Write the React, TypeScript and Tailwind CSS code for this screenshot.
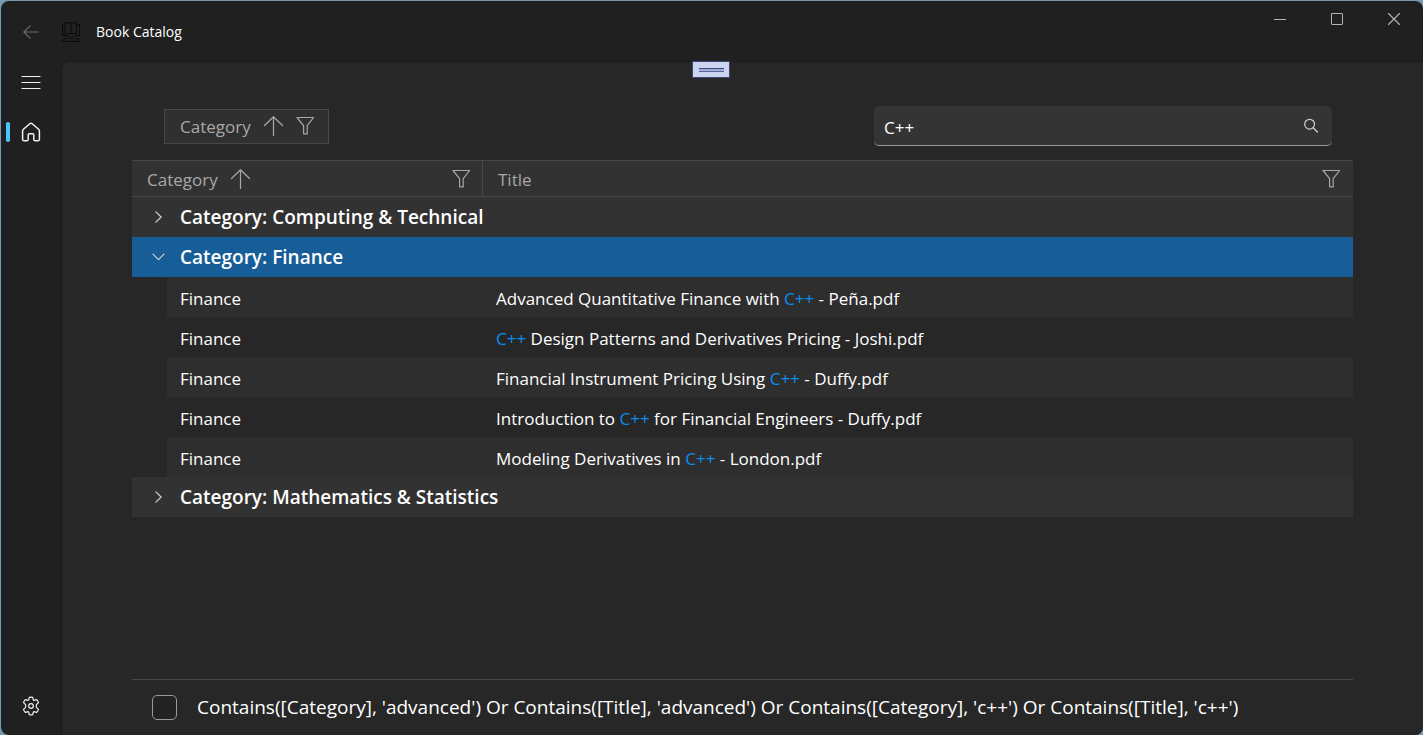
import { Fragment, useState } from "react";
import type { ReactNode } from "react";

type Book = { category: string; title: string };
type Group = { name: string; books: Book[] };

const groups: Group[] = [
  { name: "Computing & Technical", books: [] },
  {
    name: "Finance",
    books: [
      { category: "Finance", title: "Advanced Quantitative Finance with C++ - Peña.pdf" },
      { category: "Finance", title: "C++ Design Patterns and Derivatives Pricing - Joshi.pdf" },
      { category: "Finance", title: "Financial Instrument Pricing Using C++ - Duffy.pdf" },
      { category: "Finance", title: "Introduction to C++ for Financial Engineers - Duffy.pdf" },
      { category: "Finance", title: "Modeling Derivatives in C++ - London.pdf" },
    ],
  },
  { name: "Mathematics & Statistics", books: [] },
];

function Highlight({ text, term }: { text: string; term: string }) {
  const at = term ? text.toLowerCase().indexOf(term.toLowerCase()) : -1;
  if (at < 0) return <>{text}</>;
  return (
    <>
      {text.slice(0, at)}
      <mark className="bg-transparent text-[#0a8cf0]">{text.slice(at, at + term.length)}</mark>
      {text.slice(at + term.length)}
    </>
  );
}

function Icon({ size, className, children }: { size: number; className?: string; children: ReactNode }) {
  return (
    <svg
      width={size}
      height={size}
      viewBox={`0 0 ${size} ${size}`}
      fill="none"
      stroke="currentColor"
      strokeLinecap="round"
      strokeLinejoin="round"
      className={className}
      aria-hidden="true"
    >
      {children}
    </svg>
  );
}

function SortArrow() {
  return (
    <Icon size={20} className="shrink-0">
      <path d="M10.5 0.8V19.5M1.5 9.5L10.5 0.8L19.5 9.5" strokeWidth="1.2" />
    </Icon>
  );
}

function Funnel() {
  return (
    <Icon size={20} className="shrink-0">
      <path d="M2 1.5H18.6L12.2 9.6V17.8H8.6V9.6Z" strokeWidth="1.2" />
    </Icon>
  );
}

function Chevron({ open }: { open: boolean }) {
  return (
    <Icon size={14} className="shrink-0 text-[#d8d8d8]">
      <path d={open ? "M1 4.2L6.5 9.7L12 4.2" : "M3.9 1.8L9.1 7L3.9 12.2"} strokeWidth="1.1" />
    </Icon>
  );
}

function BookLogo() {
  return (
    <Icon size={20} className="text-[#0a0a0a]">
      <path
        d="M4.5 0.8H15.5V11.5H4.5ZM10 0.8V11.5M4.5 2.5H1.5V13.5H6M15.5 2.5H18.5V13.5H14M5.5 13L10 17L14.5 13M5.5 16.5H3L0.6 19.5H19.4L17 16.5H14.5"
        strokeWidth="1"
      />
    </Icon>
  );
}

function TitleBar() {
  return (
    <header className="flex h-[60px] shrink-0 justify-between">
      <div className="flex items-center pt-px">
        <button aria-label="Back" className="flex w-[60px] justify-center text-[#6b6b6b]">
          <Icon size={16}>
            <path d="M15.4 8H0.8M7.2 1.8L0.8 8L7.2 14.2" strokeWidth="1.1" />
          </Icon>
        </button>
        <BookLogo />
        <h1 className="ml-[15px] text-sm text-white">Book Catalog</h1>
      </div>
      <div className="flex h-9 pr-px text-[#b4b4b4]">
        <button aria-label="Minimize" className="flex w-[57px] items-center justify-center">
          <Icon size={12}>
            <path d="M0 6.5H12" strokeLinecap="butt" />
          </Icon>
        </button>
        <button aria-label="Maximize" className="flex w-[57px] items-center justify-center">
          <Icon size={12}>
            <rect x="0.5" y="0.5" width="11" height="11" rx="0.5" />
          </Icon>
        </button>
        <button aria-label="Close" className="flex w-[57px] items-center justify-center">
          <Icon size={12}>
            <path d="M0.5 0.5L11.5 11.5M11.5 0.5L0.5 11.5" strokeWidth="1.1" />
          </Icon>
        </button>
      </div>
    </header>
  );
}

function SideNav() {
  return (
    <nav className="flex w-[60px] shrink-0 flex-col items-center pt-px text-[#f0f0f0]">
      <button aria-label="Menu" className="flex h-10 w-full items-center justify-center">
        <Icon size={20}>
          <path d="M1 4.5H19M1 10.5H19M1 16.5H19" strokeWidth="1.2" />
        </Icon>
      </button>
      <a href="#home" aria-label="Home" className="mt-1.5 flex h-12 w-full items-center">
        <span className="ml-[5px] h-5 w-1 rounded-full bg-[#4cc2ff]" />
        <Icon size={20} className="ml-[11px]">
          <path
            d="M10 1.2Q10.6 1.2 11.2 1.7L17.6 7.3Q18.4 8 18.4 9V17.2Q18.4 18.8 16.8 18.8H14.2Q12.8 18.8 12.8 17.4V13Q12.8 11.8 11.6 11.8H8.4Q7.2 11.8 7.2 13V17.4Q7.2 18.8 5.8 18.8H3.2Q1.6 18.8 1.6 17.2V9Q1.6 8 2.4 7.3L8.8 1.7Q9.4 1.2 10 1.2Z"
            strokeWidth="1.5"
          />
        </Icon>
      </a>
      <button aria-label="Settings" className="mt-auto mb-[9px] flex h-10 w-full items-center justify-center">
        <Icon size={20}>
          <path
            d="M8.3 1.4Q10 1 11.7 1.4L12.2 3.5Q12.5 4.5 13.6 4.2L15.7 3.6Q17 4.9 17.5 6.6L15.9 8.2Q15.2 9 15.2 10Q15.2 11 15.9 11.8L17.5 13.4Q17 15.1 15.7 16.4L13.6 15.8Q12.5 15.5 12.2 16.5L11.7 18.6Q10 19 8.3 18.6L7.8 16.5Q7.5 15.5 6.4 15.8L4.3 16.4Q3 15.1 2.5 13.4L4.1 11.8Q4.8 11 4.8 10Q4.8 9 4.1 8.2L2.5 6.6Q3 4.9 4.3 3.6L6.4 4.2Q7.5 4.5 7.8 3.5Z"
            strokeWidth="1.2"
          />
          <circle cx="10" cy="10" r="2.3" strokeWidth="1.2" />
        </Icon>
      </button>
    </nav>
  );
}

export default function App() {
  const [query, setQuery] = useState("C++");
  const [openGroup, setOpenGroup] = useState("Finance");
  const [filterOn, setFilterOn] = useState(false);

  return (
    <div className="flex min-h-screen flex-col bg-[#7899b0] pt-px pl-px font-['Open_Sans','Noto_Sans',sans-serif]">
      <div className="flex flex-1 flex-col overflow-hidden rounded-lg bg-[#202020]">
        <TitleBar />
        <div className="flex flex-1">
          <SideNav />
          <main className="relative flex min-w-0 flex-1 flex-col rounded-tl-lg border-t border-l border-[#1c1c1c] bg-[#272727] px-[70px]">
            <button
              aria-label="Toolbar"
              className="absolute -top-px left-[630px] flex h-[17px] w-[38px] flex-col items-center justify-center border border-[#3d4878] bg-[#ccd5f0]"
            >
              <span className="h-px w-[25px] bg-[#3d4878]" />
              <span className="h-0.5 w-[25px] bg-[#a3aed4]" />
              <span className="h-px w-[25px] bg-[#5c689a]" />
            </button>

            <div className="flex items-center justify-between pt-11 pr-[21px] pb-3.5 pl-8">
              <div className="flex h-[35px] items-center border border-[#484848] bg-[#303030] px-[15px] text-[17px] text-[#a8a8a8]">
                <span className="mr-3 pt-0.5">Category</span>
                <button aria-label="Sort by category" className="mr-3">
                  <SortArrow />
                </button>
                <button aria-label="Filter category" className="-mr-0.5">
                  <Funnel />
                </button>
              </div>
              <div className="flex h-10 w-[458px] items-center rounded-[5px] border-b border-[#9a9a9a] bg-[#343434] px-2.5">
                <input
                  type="text"
                  aria-label="Search"
                  value={query}
                  onChange={(e) => setQuery(e.target.value)}
                  className="h-8 min-w-0 flex-1 bg-transparent pt-1 text-[17px] text-white outline-none"
                />
                <Icon size={16} className="mr-[3px] text-[#cfcfcf]">
                  <circle cx="6.6" cy="6.2" r="4.9" strokeWidth="1.2" />
                  <path d="M10.2 9.8L14.4 14" strokeWidth="1.3" />
                </Icon>
              </div>
            </div>

            <table className="w-full table-fixed border-separate border-spacing-0 text-left text-[17px] text-white">
              <colgroup>
                <col className="w-[35px]" />
                <col className="w-[316px]" />
                <col />
              </colgroup>
              <thead className="bg-[#323232] text-[#a8a8a8]">
                <tr className="h-[37px]">
                  <th colSpan={2} className="border-y border-r border-[#484848] p-0 font-normal">
                    <div className="flex items-center pr-[11px] pl-[15px]">
                      <span className="mr-3 pt-0.5">Category</span>
                      <SortArrow />
                      <button aria-label="Filter category column" className="ml-auto">
                        <Funnel />
                      </button>
                    </div>
                  </th>
                  <th className="border-y border-[#484848] p-0 font-normal">
                    <div className="flex items-center pr-3 pl-[15px]">
                      <span className="pt-0.5">Title</span>
                      <button aria-label="Filter title column" className="ml-auto">
                        <Funnel />
                      </button>
                    </div>
                  </th>
                </tr>
              </thead>
              <tbody>
                {groups.map((group) => {
                  const open = group.name === openGroup;
                  return (
                    <Fragment key={group.name}>
                      <tr className={open ? "bg-[#175d97]" : "bg-[#323232]"}>
                        <th colSpan={3} className="p-0 font-semibold">
                          <button
                            aria-expanded={open}
                            onClick={() => setOpenGroup(open ? "" : group.name)}
                            className="flex h-10 w-full items-center gap-3.5 pl-5 text-[19px]"
                          >
                            <Chevron open={open} />
                            <span>Category: {group.name}</span>
                          </button>
                        </th>
                      </tr>
                      {open &&
                        group.books.map((book, i) => (
                          <tr key={book.title} className="h-10">
                            <td className="p-0" />
                            <td className={i % 2 === 0 ? "bg-[#2e2e2e] p-0 pt-1 pl-[13px]" : "p-0 pt-1 pl-[13px]"}>
                              {book.category}
                            </td>
                            <td className={i % 2 === 0 ? "bg-[#2e2e2e] p-0 pt-1 pl-[13px]" : "p-0 pt-1 pl-[13px]"}>
                              <Highlight text={book.title} term={query} />
                            </td>
                          </tr>
                        ))}
                    </Fragment>
                  );
                })}
              </tbody>
            </table>

            <footer className="mt-auto border-t border-[#484848]">
              <label className="flex h-[55px] items-center gap-5 pl-5 text-[19px] text-white">
                <input
                  type="checkbox"
                  checked={filterOn}
                  onChange={(e) => setFilterOn(e.target.checked)}
                  className="size-[25px] shrink-0 appearance-none rounded-[5px] border border-[#9a9a9a] bg-[#232323] checked:bg-[#4cc2ff]"
                />
                <span>
                  Contains([Category], 'advanced') Or Contains([Title], 'advanced') Or Contains([Category], 'c++') Or
                  Contains([Title], 'c++')
                </span>
              </label>
            </footer>
          </main>
        </div>
      </div>
    </div>
  );
}
